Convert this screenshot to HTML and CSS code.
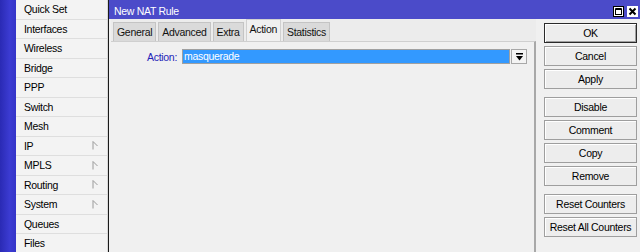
FILE: index.html
```html
<!DOCTYPE html>
<html lang="en">
<head>
  <meta charset="UTF-8" />
  <title>New NAT Rule</title>
  <link rel="stylesheet" href="styles.css">
</head>
<body>
  <div class="app">
    <div class="strip"></div>

    <ul class="menu">
      <li>Quick Set</li>
      <li>Interfaces</li>
      <li>Wireless</li>
      <li>Bridge</li>
      <li>PPP</li>
      <li>Switch</li>
      <li>Mesh</li>
      <li class="sub">IP <svg width="6" height="9" viewBox="0 0 6 9"><path d="M1 0.5V8.5M1 0.5L5.5 5" stroke="#9a9a9a" fill="none"/></svg></li>
      <li class="sub">MPLS <svg width="6" height="9" viewBox="0 0 6 9"><path d="M1 0.5V8.5M1 0.5L5.5 5" stroke="#9a9a9a" fill="none"/></svg></li>
      <li class="sub">Routing <svg width="6" height="9" viewBox="0 0 6 9"><path d="M1 0.5V8.5M1 0.5L5.5 5" stroke="#9a9a9a" fill="none"/></svg></li>
      <li class="sub">System <svg width="6" height="9" viewBox="0 0 6 9"><path d="M1 0.5V8.5M1 0.5L5.5 5" stroke="#9a9a9a" fill="none"/></svg></li>
      <li>Queues</li>
      <li>Files</li>
    </ul>

    <div class="window">
      <div class="titlebar">
        <span class="title">New NAT Rule</span>
        <span class="tbtn">
          <svg width="11" height="11" viewBox="0 0 11 11"><rect x="0.5" y="0.5" width="10" height="10" fill="#fff" stroke="#000"/><rect x="2.5" y="3" width="6" height="5.5" fill="none" stroke="#000"/><line x1="2.5" y1="3" x2="8.5" y2="3" stroke="#000" stroke-width="2"/></svg>
        </span>
        <span class="tbtn">
          <svg width="11" height="11" viewBox="0 0 11 11"><rect x="0.5" y="0.5" width="10" height="10" fill="#fff" stroke="#fff"/><path d="M2.5 2.5L8.5 8.5M8.5 2.5L2.5 8.5" stroke="#000" stroke-width="2"/></svg>
        </span>
      </div>

      <div class="win-body">
        <div class="main">
          <div class="tabs">
            <span class="tab">General</span>
            <span class="tab">Advanced</span>
            <span class="tab">Extra</span>
            <span class="tab active">Action</span>
            <span class="tab">Statistics</span>
          </div>
          <div class="panel">
            <div class="row">
              <label class="lbl">Action:</label>
              <div class="select">masquerade</div>
              <span class="drop">
                <svg width="9" height="8" viewBox="0 0 9 8"><rect x="1" y="0" width="7" height="1.5" fill="#000"/><path d="M1 3H8L4.5 7.5Z" fill="#000"/></svg>
              </span>
            </div>
          </div>
        </div>

        <div class="buttons">
          <div class="group">
            <button class="default">OK</button>
            <button>Cancel</button>
            <button>Apply</button>
          </div>
          <div class="group">
            <button>Disable</button>
            <button>Comment</button>
            <button>Copy</button>
            <button>Remove</button>
          </div>
          <div class="group">
            <button>Reset Counters</button>
            <button>Reset All Counters</button>
          </div>
        </div>
      </div>
    </div>
  </div>
</body>
</html>
```

FILE: styles.css
```css
html, body {
  margin: 0;
  padding: 0;
}
body {
  width: 640px;
  height: 252px;
  overflow: hidden;
  font-family: "Liberation Sans", Arial, sans-serif;
  font-size: 10.5px;
  letter-spacing: -0.3px;
  color: #000;
  background: #f0f0f0;
}
.app {
  display: flex;
  height: 252px;
}
.strip {
  width: 16px;
  background: linear-gradient(to right, #2a2ab4, #3b3bd2 60%, #3434c8);
}
.menu {
  list-style: none;
  margin: 0;
  padding: 0;
  width: 91px;
  background: #f3f3f3;
  border-right: 1px solid #d8d8d8;
}
.menu li {
  height: 18.5px;
  line-height: 18.5px;
  padding-left: 8px;
  padding-right: 9px;
  border-bottom: 1px solid #dedede;
  display: flex;
  align-items: center;
  justify-content: space-between;
}
.window {
  flex: 1;
  display: flex;
  flex-direction: column;
  border-left: 1px solid #1a1a1a;
  background: #f0f0f0;
}
.titlebar {
  height: 19px;
  background: #4b4bc9;
  color: #fff;
  display: flex;
  align-items: center;
  padding-left: 5px;
  padding-right: 2px;
}
.title {
  flex: 1;
  padding-top: 2px;
}
.tbtn {
  display: flex;
  margin-left: 3px;
  padding-top: 3px;
}
.win-body {
  flex: 1;
  display: flex;
}
.main {
  width: 425px;
  display: flex;
  flex-direction: column;
  padding-left: 2px;
}
.tabs {
  display: flex;
  align-items: flex-end;
  gap: 2px;
  height: 22px;
  padding-left: 2px;
  background: #ececec;
}
.tab {
  height: 18px;
  line-height: 18px;
  padding: 0 3px;
  background: #dadada;
  border: 1px solid #c4c4c4;
  border-bottom: none;
  color: #111;
}
.tab.active {
  height: 21px;
  line-height: 19px;
  background: #f0f0f0;
  border-color: #d0d0d0;
}
.panel {
  flex: 1;
  border-top: 1px solid #cfcfcf;
  border-right: 2px solid #a8a8a8;
  background: #f0f0f0;
}
.row {
  display: flex;
  align-items: center;
  margin-top: 7px;
  height: 15px;
}
.lbl {
  width: 66px;
  text-align: right;
  color: #2424b8;
  padding-right: 5px;
}
.select {
  width: 325px;
  height: 13px;
  line-height: 13px;
  background: #3399ff;
  color: #fff;
  border: 1px solid #a0a0a0;
  padding-left: 1px;
}
.drop {
  width: 14px;
  height: 13px;
  margin-left: 1px;
  border: 1px solid #a8a8a8;
  background: #f4f4f4;
  display: flex;
  align-items: center;
  justify-content: center;
}
.buttons {
  flex: 1;
  display: flex;
  flex-direction: column;
  gap: 8px;
  padding: 4px 2px 0 8px;
}
.group {
  display: flex;
  flex-direction: column;
  gap: 3px;
}
button {
  height: 20px;
  width: 93px;
  padding: 0;
  white-space: nowrap;
  font-family: "Liberation Sans", Arial, sans-serif;
  font-size: 10.5px;
  letter-spacing: -0.3px;
  color: #000;
  background: #ededed;
  border: 1px solid #9e9e9e;
  box-shadow: inset 1px 1px 0 #fff;
}
button.default {
  border: 1px solid #2a2a2a;
  box-shadow: inset 1px 1px 0 #fff, inset -1px -1px 0 #a0a0a0;
}
```
